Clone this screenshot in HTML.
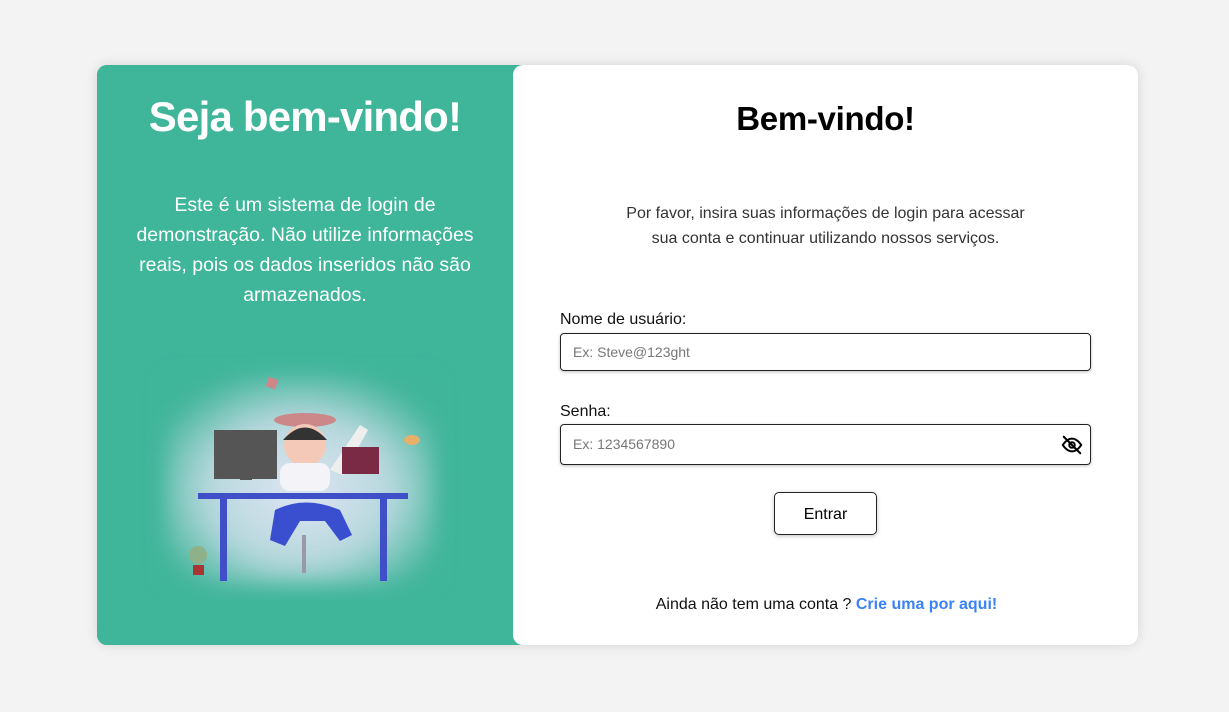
<!DOCTYPE html>
<html><head><meta charset="utf-8"><style>
*{margin:0;padding:0;box-sizing:border-box}
body{width:1229px;height:712px;background:#f3f3f3;font-family:"Liberation Sans",sans-serif;position:relative;overflow:hidden}
.card{position:absolute;left:97px;top:65px;width:1041px;height:580px;border-radius:10px;box-shadow:0 0 12px rgba(0,0,0,.12);background:#3fb59a}
.left{position:absolute;left:0;top:0;width:428px;height:580px;background:#3fb59a;border-radius:10px 0 0 10px;color:#fff;text-align:center}
.left h1{position:absolute;top:28px;width:416px;font-size:42px;font-weight:bold;letter-spacing:-0.8px}
.left p{position:absolute;top:125px;left:26px;width:364px;font-size:19.5px;line-height:30px}
.right{position:absolute;left:416px;top:0;width:625px;height:580px;background:#fff;border-radius:10px}
.right h2{position:absolute;top:35px;width:100%;text-align:center;font-size:33px;font-weight:bold;color:#000;letter-spacing:-0.3px}
.desc{position:absolute;top:136px;left:0;width:100%;text-align:center;font-size:16px;line-height:25px;color:#333}
label{position:absolute;left:47px;font-size:16px;color:#111}
.inp{position:absolute;left:47px;width:531px;border:1px solid #222;border-radius:4px;font-size:14px;color:#777;padding-left:12px;box-shadow:0 1px 3px rgba(0,0,0,.25)}
.btn{position:absolute;left:261px;top:427px;width:103px;height:43px;border:1px solid #222;border-radius:5px;text-align:center;line-height:43px;font-size:16px;box-shadow:0 1px 4px rgba(0,0,0,.25)}
.foot{position:absolute;top:531px;width:100%;text-align:center;font-size:16px;color:#111;padding-left:2px}
.foot b{color:#3b82f6}
</style></head><body>
<div class="card">
<div class="left">
<h1>Seja bem-vindo!</h1>
<p>Este é um sistema de login de demonstração. Não utilize informações reais, pois os dados inseridos não são armazenados.</p>
<svg style="position:absolute;left:43px;top:285px" width="320" height="250" viewBox="0 0 320 250">
<defs><radialGradient id="g" cx="50%" cy="55%" r="60%"><stop offset="0" stop-color="#dfe6f2"/><stop offset=".55" stop-color="#b8d8de"/><stop offset="1" stop-color="#3fb59a"/></radialGradient>
<filter id="b"><feGaussianBlur stdDeviation="10"/></filter></defs>
<rect x="25" y="25" width="270" height="210" fill="url(#g)" filter="url(#b)"/>
<rect x="74" y="80" width="63" height="49" fill="#555"/>
<rect x="100" y="110" width="12" height="20" fill="#555"/>
<rect x="127" y="28" width="10" height="10" fill="#c88" transform="rotate(20 132 33)"/>
<ellipse cx="165" cy="70" rx="31" ry="7" fill="#c88"/>
<circle cx="165" cy="95" r="21" fill="#f4c9b8"/>
<path d="M143 90 q22-25 44 0 z" fill="#333"/>
<rect x="140" y="113" width="50" height="28" rx="10" fill="#f4f4f8"/>
<path d="M190 120 l30-45 l8 5 l-25 45z" fill="#eee"/>
<rect x="202" y="97" width="37" height="27" fill="#7a2a45"/>
<rect x="58" y="143" width="210" height="6" fill="#3e4fc7"/>
<rect x="80" y="149" width="7" height="82" fill="#3e4fc7"/>
<rect x="240" y="149" width="7" height="82" fill="#3e4fc7"/>
<path d="M135 160 q30-15 65 0 l12 25 -12 6 -15-20 -25 0 -15 25 -15-6z" fill="#3a4fd0"/>
<rect x="162" y="185" width="4" height="38" fill="#99a"/>
<circle cx="58" cy="205" r="9" fill="#8fb18a"/>
<rect x="53" y="215" width="11" height="10" fill="#a33"/>
<ellipse cx="272" cy="90" rx="8" ry="5" fill="#e5b06a"/>
</svg>
</div>
<div class="right">
<h2>Bem-vindo!</h2>
<div class="desc">Por favor, insira suas informações de login para acessar<br>sua conta e continuar utilizando nossos serviços.</div>
<label style="top:246px">Nome de usuário:</label>
<div class="inp" style="top:268px;height:38px;line-height:36px">Ex: Steve@123ght</div>
<label style="top:338px">Senha:</label>
<div class="inp" style="top:359px;height:41px;line-height:39px">Ex: 1234567890
<svg style="position:absolute;right:7px;top:9px" width="22" height="22" viewBox="0 0 24 24" fill="none" stroke="#000" stroke-width="2.2" stroke-linecap="round"><path d="M2 12s4-7 10-7 10 7 10 7-4 7-10 7S2 12 2 12z"/><circle cx="12" cy="12" r="3"/><path d="M3 3l18 18"/></svg></div>
<div class="btn">Entrar</div>
<div class="foot">Ainda não tem uma conta ? <b>Crie uma por aqui!</b></div>
</div>
</div>
</body></html>
